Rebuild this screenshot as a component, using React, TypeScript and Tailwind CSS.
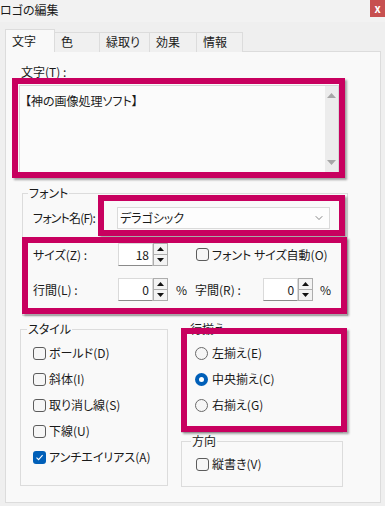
import { ChevronDown } from 'lucide-react';

function CheckBox({ checked }: { checked?: boolean }) {
  if (checked) {
    return (
      <span className="w-[13px] h-[13px] rounded-[3px] bg-[#005fb8] flex items-center justify-center shrink-0">
        <svg width="9" height="9" viewBox="0 0 9 9">
          <path d="M1.5 4.6 L3.6 6.6 L7.6 2.2" fill="none" stroke="white" strokeWidth="1.1" />
        </svg>
      </span>
    );
  }
  return <span className="w-[13px] h-[13px] rounded-[3px] border border-[#5c5c5c] bg-[#f6f6f6] shrink-0" />;
}

function Radio({ checked }: { checked?: boolean }) {
  if (checked) {
    return (
      <span className="w-[13px] h-[13px] rounded-full bg-[#005fb8] flex items-center justify-center shrink-0">
        <span className="w-[5px] h-[5px] rounded-full bg-white" />
      </span>
    );
  }
  return <span className="w-[13px] h-[13px] rounded-full border border-[#6a6a6a] bg-[#f6f6f6] shrink-0" />;
}

function Spin({ value }: { value: string }) {
  return (
    <div className="flex">
      <div className="w-[35px] h-[23px] bg-white border border-[#dadada] border-b-[#8a8a8a] text-right pr-[3px] leading-[21px] text-[#1a1a1a]">
        {value}
      </div>
      <div className="flex flex-col w-[15px] h-[23px]">
        <div className="h-[12px] border border-[#adadad] bg-[#f3f3f3] flex items-center justify-center">
          <svg width="7" height="4" viewBox="0 0 7 4"><path d="M0 4 L3.5 0 L7 4 Z" fill="#111" /></svg>
        </div>
        <div className="h-[11px] border border-t-0 border-[#adadad] bg-[#f3f3f3] flex items-center justify-center">
          <svg width="7" height="4" viewBox="0 0 7 4"><path d="M0 0 L3.5 4 L7 0 Z" fill="#111" /></svg>
        </div>
      </div>
    </div>
  );
}

const tabs = [
  { label: '文字', w: 'w-[50px]', active: true },
  { label: '色', w: 'w-[45px]' },
  { label: '緑取り', w: 'w-[50px]' },
  { label: '効果', w: 'w-[47px]' },
  { label: '情報', w: 'w-[46px]' },
];

const styles = [
  { label: 'ボールド(D)' },
  { label: '斜体(I)' },
  { label: '取り消し線(S)' },
  { label: '下線(U)' },
  { label: 'アンチエイリアス(A)', checked: true },
];

const aligns = [
  { label: '左揃え(E)' },
  { label: '中央揃え(C)', checked: true },
  { label: '右揃え(G)' },
];

export default function App() {
  return (
    <div className="relative w-[385px] h-[506px] overflow-hidden bg-[#efefef] text-[12px] leading-[14px] text-[#1a1a1a] font-['Noto_Sans_CJK_JP','Noto_Sans',sans-serif] [font-feature-settings:'palt']">
      {/* Title bar */}
      <div className="h-[22px] flex items-start justify-between bg-[#f2f2f2]">
        <span className="mt-[3px]">ロゴの編集</span>
        <div className="w-[15px] h-[17px] bg-[#c75050] flex items-center justify-center text-white text-[11px] font-bold leading-none">
          x
        </div>
      </div>

      {/* Tabs */}
      <div className="mt-[7px] ml-[5px] flex items-end">
        {tabs.map((t) =>
          t.active ? (
            <div
              key={t.label}
              className={`${t.w} h-[23px] relative z-10 bg-[#f9f9f9] border border-b-0 border-[#dcdcdc] pl-[6px] pt-[4px]`}
            >
              {t.label}
            </div>
          ) : (
            <div
              key={t.label}
              className={`${t.w} h-[20px] bg-[#f0f0f0] border border-l-0 border-b-0 border-[#dcdcdc] pl-[6px] pt-[2px]`}
            >
              {t.label}
            </div>
          )
        )}
      </div>

      {/* Panel */}
      <div className="-mt-px ml-[5px] w-[376px] h-[452px] bg-[#f9f9f9] border border-[#dcdcdc] px-[13px]">
        <div className="mt-[13px] ml-[2px]">文字(T) :</div>
        <div className="mt-[6px] w-[320px] h-[88px] bg-[#fbfbfb] border border-[#d6d6d6] flex">
          <div className="flex-1 pl-[5px] pt-[8px]">【神の画像処理ソフト】</div>
          <div className="w-[13px] bg-[#ececec] flex flex-col justify-between items-center py-[7px]">
            <svg width="9" height="5" viewBox="0 0 9 5"><path d="M0 5 L4.5 0 L9 5 Z" fill="#a6a6a6" /></svg>
            <svg width="9" height="5" viewBox="0 0 9 5"><path d="M0 0 L4.5 5 L9 0 Z" fill="#a6a6a6" /></svg>
          </div>
        </div>

        {/* Font group */}
        <fieldset className="mt-[13px] ml-[3px] w-[326px] border border-[#dcdcdc] pb-[14px]">
          <legend className="ml-[5px] px-[1px]">フォント</legend>
          <div className="pl-[10px]">
            <div className="mt-[7px] flex items-center">
              <span className="w-[84px] shrink-0 whitespace-nowrap tracking-[-0.8px]">フォント名(F):</span>
              <div className="w-[213px] h-[22px] shrink-0 bg-[#fdfdfd] border border-[#dadada] flex items-center justify-between pl-[2px] pr-[4px]">
                <span>デラゴシック</span>
                <ChevronDown size={12} strokeWidth={1.3} color="#444" />
              </div>
            </div>
            <div className="mt-[14px] flex items-center">
              <span className="w-[85px]">サイズ(Z) :</span>
              <Spin value="18" />
              <span className="ml-[28px] flex items-center gap-[3px]">
                <CheckBox />
                <span>フォント サイズ自動(O)</span>
              </span>
            </div>
            <div className="mt-[12px] flex items-center">
              <span className="w-[85px]">行間(L) :</span>
              <Spin value="0" />
              <span className="ml-[8px]">%</span>
              <span className="ml-[8px] w-[68px]">字間(R) :</span>
              <Spin value="0" />
              <span className="ml-[7px]">%</span>
            </div>
          </div>
        </fieldset>

        <div className="mt-[6px] ml-[1px] flex gap-[13px]">
          {/* Style group */}
          <fieldset className="w-[148px] h-[164px] border border-[#dcdcdc]">
            <legend className="ml-[6px] px-[1px]">スタイル</legend>
            <div className="pl-[12px] mt-[10px] flex flex-col gap-[12px]">
              {styles.map((s) => (
                <div key={s.label} className="flex items-center gap-[3px]">
                  <CheckBox checked={s.checked} />
                  <span>{s.label}</span>
                </div>
              ))}
            </div>
          </fieldset>

          <div className="w-[162px] flex flex-col">
            {/* Alignment group */}
            <fieldset className="h-[111px] border border-[#dcdcdc]">
              <legend className="ml-[7px] px-[1px]">行揃え</legend>
              <div className="pl-[13px] mt-[10px] flex flex-col gap-[12px]">
                {aligns.map((a) => (
                  <div key={a.label} className="flex items-center gap-[4px]">
                    <Radio checked={a.checked} />
                    <span>{a.label}</span>
                  </div>
                ))}
              </div>
            </fieldset>
            {/* Direction group */}
            <fieldset className="mt-[1px] h-[53px] border border-[#dcdcdc]">
              <legend className="ml-[9px] px-[1px]">方向</legend>
              <div className="pl-[14px] mt-[9px] flex items-center gap-[3px]">
                <CheckBox />
                <span>縦書き(V)</span>
              </div>
            </fieldset>
          </div>
        </div>
      </div>

      {/* Highlight annotations */}
      <div className="absolute left-[12px] top-[78px] w-[333px] h-[100px] border-[6px] border-[#c8005f] shadow-[2px_2px_2px_rgba(0,0,0,0.35)]" />
      <div className="absolute left-[98px] top-[195px] w-[247px] h-[41px] border-[6px] border-[#c8005f] shadow-[2px_2px_2px_rgba(0,0,0,0.35)]" />
      <div className="absolute left-[22px] top-[237px] w-[325px] h-[77px] border-[6px] border-[#c8005f] shadow-[2px_2px_2px_rgba(0,0,0,0.35)]" />
      <div className="absolute left-[181px] top-[328px] w-[166px] h-[104px] border-[6px] border-[#c8005f] shadow-[2px_2px_2px_rgba(0,0,0,0.35)]" />
    </div>
  );
}
